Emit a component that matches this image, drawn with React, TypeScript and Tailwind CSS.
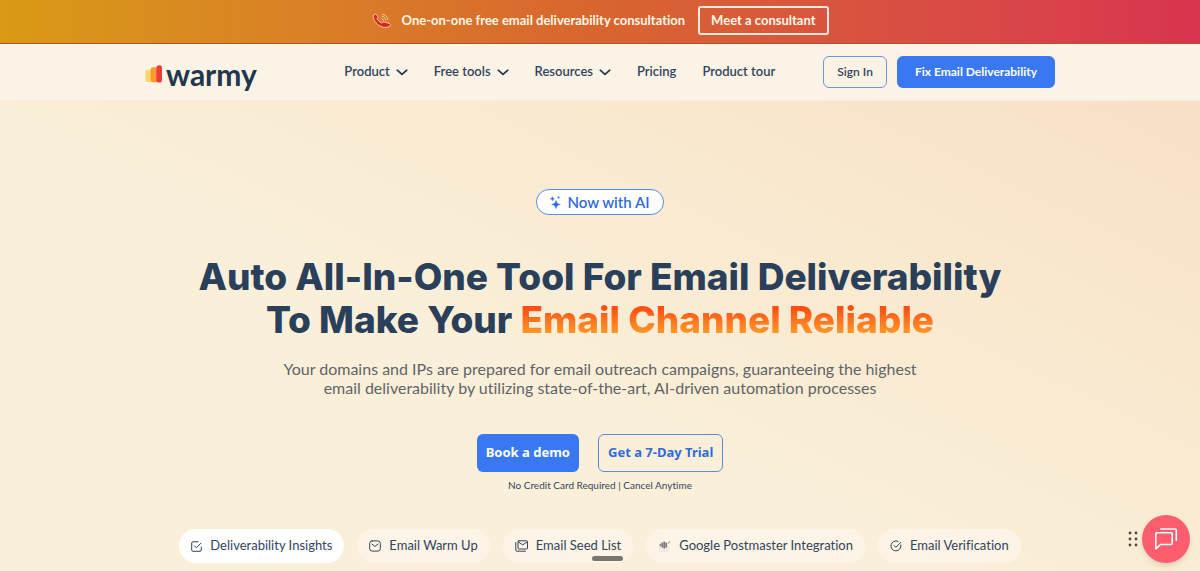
import type { ReactNode } from 'react';

type NavLink = { label: string; menu?: boolean };

const NAV_LINKS: NavLink[] = [
  { label: 'Product', menu: true },
  { label: 'Free tools', menu: true },
  { label: 'Resources', menu: true },
  { label: 'Pricing' },
  { label: 'Product tour' },
];

function PhoneIcon() {
  return (
    <svg width="20" height="16" viewBox="0 0 20 16" fill="none" aria-hidden="true">
      <path
        d="M1.500 2C2.600.8 4.300 1 5 2.300l.8 1.500c.4.900-.2 1.400-.9 1.900.9 1.800 2.700 3.300 5.100 4.300.8-.6 1.700-1.300 2.900-.9l4.300 1.300c1.600.6 1.700 1.500.8 2.400-2.600 2.400-7.200 2.100-11-.4C3.100 9.700.500 5.100 1.500 2Z"
        fill="#d6281c"
        stroke="#fbd9c0"
        strokeWidth="0.900"
      />
      <path d="M9.500 5.400c1 .1 1.900.9 2.100 2M10 3.300c1.900.2 3.500 1.600 3.800 3.600M10.400 1.300c2.700.2 5 2.300 5.400 5" stroke="#f6cdb0" strokeWidth="0.900" strokeLinecap="round" />
    </svg>
  );
}

function LogoBars() {
  return (
    <svg width="17" height="18" viewBox="0 0 17 18" aria-hidden="true">
      <rect x="0.500" y="4.800" width="8" height="12.200" rx="2" fill="#fbd568" />
      <rect x="5.700" y="2.300" width="7" height="15" rx="2.200" fill="#f89a32" />
      <rect x="11.400" y="0.300" width="5.600" height="17.200" rx="2.600" fill="#ee3b35" />
    </svg>
  );
}

function Chevron() {
  return (
    <svg width="12" height="7" viewBox="0 0 12 7" fill="none" aria-hidden="true">
      <path d="M1.200 1.200 6 5.400l4.800-4.200" stroke="#22364d" strokeWidth="1.700" strokeLinecap="round" strokeLinejoin="round" />
    </svg>
  );
}

function Sparkles() {
  return (
    <svg width="11" height="13" viewBox="0 0 11 13" fill="#2f6bdc" aria-hidden="true">
      <path d="M6 4.500c.5 2.300 1.300 3.300 4.300 4-3 .7-3.800 1.700-4.300 4-.5-2.300-1.300-3.300-4.300-4 3-.7 3.800-1.700 4.300-4Z" stroke="#2f6bdc" strokeWidth="0.500" />
      <path d="M2.400.8c.2 1.200.7 1.700 2 2-1.300.3-1.800.8-2 2-.2-1.200-.7-1.700-2-2 1.300-.3 1.800-.8 2-2Z" stroke="#2f6bdc" strokeWidth="0.500" />
      <circle cx="8.500" cy="1.600" r="1" />
    </svg>
  );
}

function CheckSquareIcon() {
  return (
    <svg width="11" height="11" viewBox="0 0 11 11" fill="none" stroke="#33445c" strokeLinecap="round" strokeLinejoin="round" aria-hidden="true">
      <path d="M7 .8H2C1.200.8.700 1.300.700 2v7c0 .8.500 1.300 1.300 1.300h7c.8 0 1.300-.5 1.300-1.300V6" />
      <path d="m3.400 4.800 2 2L9.900 2.200" />
    </svg>
  );
}

function EnvelopeIcon() {
  return (
    <svg width="12" height="12" viewBox="0 0 12 12" fill="none" stroke="#33445c" strokeLinecap="round" strokeLinejoin="round" aria-hidden="true">
      <rect x="0.700" y="0.900" width="10.600" height="10.200" rx="2.400" />
      <path d="m3 4.100 3 2.300 3-2.300" />
    </svg>
  );
}

function EnvelopeStackIcon() {
  return (
    <svg width="13" height="12" viewBox="0 0 13 12" fill="none" stroke="#33445c" strokeLinecap="round" strokeLinejoin="round" aria-hidden="true">
      <rect x="3" y="0.800" width="9.500" height="8.200" rx="0.800" />
      <path d="m3.400 1.900 4.300 3 4.400-3M.8 2.600v7.600c0 .6.400 1 1 1h8.700" />
    </svg>
  );
}

function PostmasterIcon() {
  return (
    <svg width="13" height="12" viewBox="0 0 13 12" aria-hidden="true">
      <path d="M1 5h10v7H1z" fill="#f1eae2" />
      <circle cx="6" cy="5" r="3.200" fill="#cbc7c4" />
      <path d="M4.200 2.800v4.500M6.200 1.600v7M8.200 2.800v4.700M2.200 3.800v2.400" stroke="#55535a" strokeWidth="1" />
      <path d="m9.800 3.500 2.200-2" stroke="#77747a" />
    </svg>
  );
}

function CheckCircleIcon() {
  return (
    <svg width="12" height="12" viewBox="0 0 12 12" fill="none" stroke="#33445c" strokeLinecap="round" strokeLinejoin="round" aria-hidden="true">
      <path d="M8 1.300A5 5 0 1 0 10.900 5" />
      <path d="m4 5.600 1.800 1.800 5-5" />
    </svg>
  );
}

function ChatIcon() {
  return (
    <svg width="24" height="24" viewBox="0 0 24 24" fill="none" stroke="#fff" strokeWidth="1.600" strokeLinejoin="round" strokeLinecap="round" aria-hidden="true">
      <path d="M3 5.800h14c.7 0 1.200.5 1.200 1.200v9.300c0 .7-.5 1.200-1.200 1.200H6.500L1.800 21.800V7c0-.7.500-1.200 1.200-1.200Z" />
      <path d="M6.800 2h14.200c.8 0 1.300.5 1.300 1.300v10" />
    </svg>
  );
}

const FEATURES: { label: string; icon: ReactNode }[] = [
  { label: 'Deliverability Insights', icon: <CheckSquareIcon /> },
  { label: 'Email Warm Up', icon: <EnvelopeIcon /> },
  { label: 'Email Seed List', icon: <EnvelopeStackIcon /> },
  { label: 'Google Postmaster Integration', icon: <PostmasterIcon /> },
  { label: 'Email Verification', icon: <CheckCircleIcon /> },
];

function Banner() {
  return (
    <div className="flex items-center justify-center border-b border-[#b5502f] bg-linear-to-r from-[#d99a14] via-[#d8652f] to-[#d9334f] px-4 pt-[6px] pb-2">
      <PhoneIcon />
      <p className="ml-[10px] text-[13px] font-bold text-[#fff8e6]">
        One-on-one free email deliverability consultation
      </p>
      <a
        href="#consultant"
        className="ml-[13px] flex h-[29px] items-center rounded-[3px] border-2 border-[#fbe9dc] px-[11px] text-[13px] font-bold text-[#fff8e6]"
      >
        Meet a consultant
      </a>
    </div>
  );
}

function Header() {
  return (
    <header className="border-b border-[#faecd8] bg-[#fbf3e5]">
      <div className="mx-auto flex h-14 max-w-[910px] items-center">
        <a href="#home" className="flex items-center gap-1 pt-1 text-[#22364d]">
          <LogoBars />
          <span className="text-[30px] leading-8 font-bold">warmy</span>
        </a>
        <nav className="ml-auto flex items-center gap-[26px] text-[13px] font-semibold text-[#33445c]">
          {NAV_LINKS.map((link) =>
            link.menu ? (
              <button key={link.label} type="button" className="flex items-center gap-[6px]">
                {link.label}
                <Chevron />
              </button>
            ) : (
              <a key={link.label} href="#page">
                {link.label}
              </a>
            ),
          )}
        </nav>
        <div className="ml-12 flex gap-[10px]">
          <a
            href="#sign-in"
            className="flex h-8 items-center rounded-md border border-[#6c98dc] px-[13px] text-xs font-semibold text-[#33445c]"
          >
            Sign In
          </a>
          <a
            href="#fix"
            className="flex h-8 items-center rounded-md bg-[#3a78f2] px-[18px] text-xs font-bold text-white"
          >
            Fix Email Deliverability
          </a>
        </div>
      </div>
    </header>
  );
}

function Hero() {
  return (
    <main className="flex flex-1 flex-col items-center px-4 pt-[88px] pb-2 text-center">
      <p className="flex h-[26px] items-center gap-[6px] rounded-full border border-[#5b8be0] bg-white px-[13px] text-[15px] font-semibold text-[#2f6bdc]">
        <Sparkles />
        Now with AI
      </p>

      <h1 className="mt-10 font-['Inter','Liberation_Sans',sans-serif] text-[37px] leading-[43px] font-extrabold text-[#2a3f5a]">
        Auto All-In-One Tool For Email Deliverability
        <br />
        To Make Your{' '}
        <span className="bg-linear-to-b from-[#ff4d14] from-25% to-[#ff9628] to-80% bg-clip-text text-transparent">
          Email Channel Reliable
        </span>
      </h1>

      <p className="mt-[18px] text-base leading-[19px] text-[#5f6468]">
        Your domains and IPs are prepared for email outreach campaigns, guaranteeing the highest
        <br />
        email deliverability by utilizing state-of-the-art, AI-driven automation processes
      </p>

      <div className="mt-[37px] flex gap-[19px] font-['Noto_Sans','Open_Sans',sans-serif] text-[13px] font-bold">
        <a href="#demo" className="flex h-[38px] items-center rounded-md bg-[#3a78f2] px-[9px] text-white">
          Book a demo
        </a>
        <a
          href="#trial"
          className="flex h-[38px] items-center rounded-md border border-[#5b8be0] px-[9px] text-[#2f6bdc]"
        >
          Get a 7-Day Trial
        </a>
      </div>
      <p className="mt-[5px] text-[10px] leading-4 text-[#33445c]">No Credit Card Required | Cancel Anytime</p>

      <ul className="mt-auto flex gap-[13px]">
        {FEATURES.map((feature, i) => (
          <li key={feature.label}>
            <button
              type="button"
              className={`flex h-[34px] items-center gap-2 rounded-full px-3 text-[13px] whitespace-nowrap text-[#33445c] ${
                i === 0 ? 'bg-white' : 'bg-[#fcf4e6]'
              }`}
            >
              {feature.icon}
              {feature.label}
            </button>
          </li>
        ))}
      </ul>
    </main>
  );
}

function ChatWidget() {
  return (
    <div className="fixed right-[10px] bottom-2 flex items-center gap-1">
      <svg width="10" height="16" viewBox="0 0 10 16" fill="#4d4a46" aria-hidden="true">
        {[2, 8, 14].map((y) => (
          <g key={y}>
            <circle cx="2" cy={y} r="1.400" />
            <circle cx="8" cy={y} r="1.400" />
          </g>
        ))}
      </svg>
      <button
        type="button"
        aria-label="Open chat"
        className="flex size-12 items-center justify-center rounded-full bg-[#fd5d6c] shadow-md"
      >
        <ChatIcon />
      </button>
    </div>
  );
}

export default function App() {
  return (
    <div className="flex min-h-screen flex-col bg-linear-to-tr from-[#faf0da] from-35% via-[#f9e9cf] via-65% to-[#f8dcc4] font-['Lato','Noto_Sans',sans-serif] [font-variant-ligatures:none]">
      <Banner />
      <Header />
      <Hero />
      <div className="fixed bottom-[10px] left-1/2 ml-[-8px] h-[5px] w-[31px] rounded-full bg-[#7b766b]" />
      <ChatWidget />
    </div>
  );
}
